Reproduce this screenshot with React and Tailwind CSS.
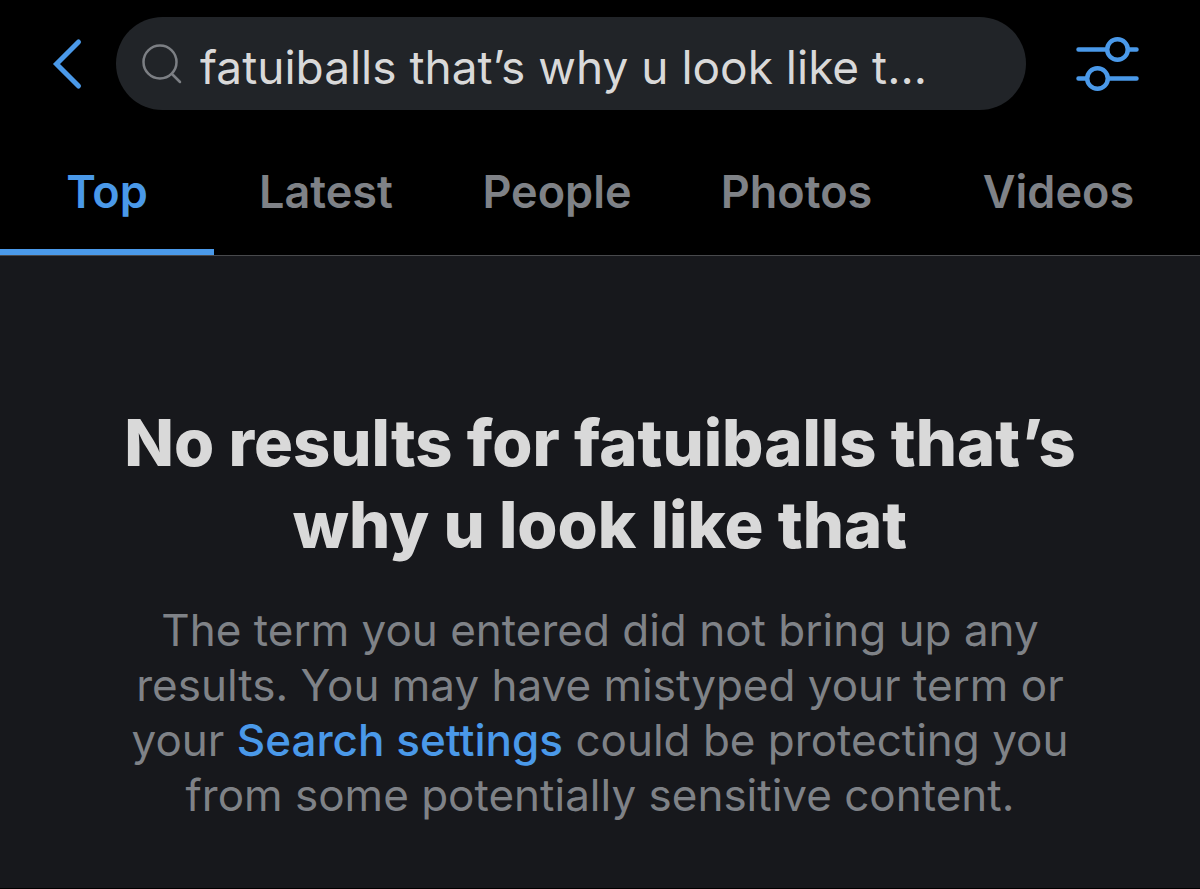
import { useState } from "react";

const tabs = [
  { name: "Top", width: "flex-[214]" },
  { name: "Latest", width: "flex-[224]" },
  { name: "People", width: "flex-[238]" },
  { name: "Photos", width: "flex-[241]" },
  { name: "Videos", width: "flex-[283]" },
];

function SearchBar() {
  const [query, setQuery] = useState("fatuiballs that’s why u look like that");

  return (
    <div className="flex items-center pt-[17px] pl-[52px] pr-[60px]">
      <button type="button" aria-label="Back" className="w-8 shrink-0 text-[#4a99e9]">
        <svg viewBox="0 0 32 52" className="w-8 h-[52px]" fill="none" stroke="currentColor" strokeWidth="5" strokeLinecap="round" strokeLinejoin="miter">
          <path d="M26.5 4 4.5 26l22 22" />
        </svg>
      </button>
      <label className="ml-8 flex h-[93px] min-w-0 flex-1 items-center rounded-full bg-[#212428] pl-6 pr-[88px]">
        <svg viewBox="0 0 44 44" className="h-11 w-11 shrink-0 text-[#7c7f84]" fill="none" stroke="currentColor" strokeWidth="2.5" strokeLinecap="round">
          <circle cx="20" cy="20" r="16.5" />
          <path d="M32 32l8 8" />
        </svg>
        <input
          type="text"
          aria-label="Search"
          value={query}
          onChange={(e) => setQuery(e.target.value)}
          className="ml-4 w-full min-w-0 text-ellipsis bg-transparent pt-2 text-[46px] text-[#d9d9d9] outline-none"
        />
      </label>
      <button type="button" aria-label="Search filters" className="ml-12 shrink-0 text-[#4a99e9]">
        <svg viewBox="0 0 66 56" className="h-14 w-[66px]" fill="none" stroke="currentColor" strokeWidth="4.5" strokeLinecap="round">
          <path d="M4.5 13.5h27M54 13.5h8.5M4.5 42.5h8M35 42.5h27.5" />
          <circle cx="43.5" cy="13.5" r="10.3" />
          <circle cx="23.5" cy="42.5" r="10.3" />
        </svg>
      </button>
    </div>
  );
}

export default function App() {
  const [active, setActive] = useState("Top");

  return (
    <div className="flex min-h-screen flex-col border-b border-black bg-[#17181c] font-['Inter',sans-serif]">
      <header className="border-b border-[#48494c] bg-black">
        <SearchBar />
        <nav className="mt-5 flex">
          {tabs.map((tab) => (
            <button
              key={tab.name}
              type="button"
              onClick={() => setActive(tab.name)}
              className={`${tab.width} h-[125px] border-b-6 pt-1 text-[45px] font-semibold ${
                active === tab.name ? "border-[#4a99e9] text-[#4a99e9]" : "border-transparent text-[#7f8287]"
              }`}
            >
              {tab.name}
            </button>
          ))}
        </nav>
      </header>

      <main className="flex-1 px-[120px] pt-[146px] pb-10 text-center">
        <h1 className="text-[65px] leading-[82px] font-extrabold text-[#d9d9d9]">
          No results for fatuiballs that’s why u look like that
        </h1>
        <p className="mt-[37px] text-[44px] leading-[55px] text-[#7f8287]">
          The term you entered did not bring up any results. You may have mistyped your term or your{" "}
          <a href="#settings" className="font-medium text-[#4a99e9]">
            Search settings
          </a>{" "}
          could be protecting you from some potentially sensitive content.
        </p>
      </main>
    </div>
  );
}
